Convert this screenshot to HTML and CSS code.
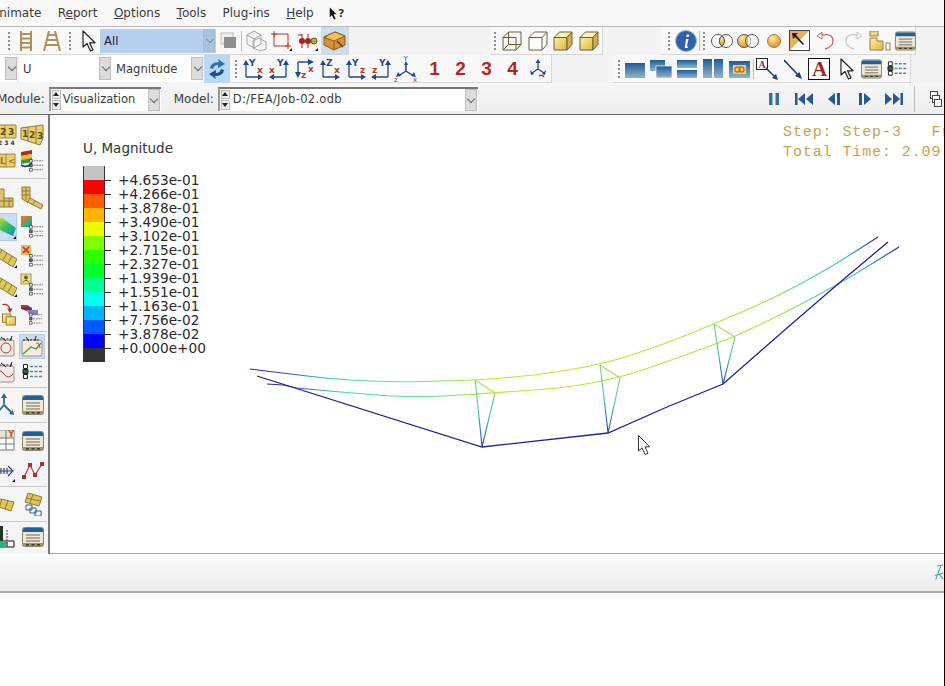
FILE: index.html
```html
<!DOCTYPE html>
<html lang="en">
<head>
<meta charset="utf-8">
<title>Abaqus/CAE Visualization</title>
<link rel="stylesheet" href="styles.css">
</head>
<body>
<svg class="sprite" aria-hidden="true">
  <defs>
    <linearGradient id="gold" x1="0" y1="0" x2="1" y2="1"><stop offset="0" stop-color="#fdf0a8"/><stop offset="1" stop-color="#e2b440"/></linearGradient>
    <linearGradient id="steel" x1="0" y1="0" x2="0" y2="1"><stop offset="0" stop-color="#1c5c96"/><stop offset="1" stop-color="#94b4cf"/></linearGradient>
    <radialGradient id="ball" cx=".4" cy=".3" r=".8"><stop offset="0" stop-color="#ffe9a0"/><stop offset="1" stop-color="#d9861a"/></radialGradient>
    <linearGradient id="rain" x1="0" y1="0" x2="1" y2="1"><stop offset="0" stop-color="#e8e020"/><stop offset=".5" stop-color="#30c060"/><stop offset="1" stop-color="#2080d0"/></linearGradient>
    <linearGradient id="chordA" gradientUnits="userSpaceOnUse" x1="250" y1="0" x2="878" y2="0">
      <stop offset="0" stop-color="#20208c"/><stop offset=".07" stop-color="#3060b0"/><stop offset=".13" stop-color="#40d8d0"/><stop offset=".24" stop-color="#60e090"/><stop offset=".36" stop-color="#b4ec30"/><stop offset=".8" stop-color="#a8ec30"/><stop offset=".89" stop-color="#50d8a0"/><stop offset=".945" stop-color="#40c0d8"/><stop offset=".98" stop-color="#2860b0"/><stop offset="1" stop-color="#20208c"/>
    </linearGradient>
    <linearGradient id="chordB" gradientUnits="userSpaceOnUse" x1="267" y1="0" x2="899" y2="0">
      <stop offset="0" stop-color="#20208c"/><stop offset=".05" stop-color="#3060b0"/><stop offset=".12" stop-color="#40d8d0"/><stop offset=".26" stop-color="#60e090"/><stop offset=".36" stop-color="#b4ec30"/><stop offset=".8" stop-color="#a8ec30"/><stop offset=".88" stop-color="#50d8a0"/><stop offset=".94" stop-color="#40c0d8"/><stop offset=".98" stop-color="#2860b0"/><stop offset="1" stop-color="#20208c"/>
    </linearGradient>
    <linearGradient id="web" gradientUnits="objectBoundingBox" x1="0" y1="0" x2="0" y2="1">
      <stop offset="0" stop-color="#80d860"/><stop offset=".45" stop-color="#40c0c0"/><stop offset="1" stop-color="#2040b0"/>
    </linearGradient>
  </defs>
  <symbol id="table" viewBox="0 0 22 20">
    <rect x=".5" y=".5" width="21" height="19" rx="2" fill="#efe9d6" stroke="#8a8468"/>
    <path d="M1 5V2.500Q1 1 2.500 1H19.500Q21 1 21 2.500V5Z" fill="#1f6098"/>
    <path d="M4 8H18M4 11H18M4 14H18" stroke="#6d6a58"/>
    <path d="M1 16H21V19H1Z" fill="#9d9670"/>
    <path d="M4 17h3v1.500H4ZM9.500 17h3v1.500h-3ZM15 17h3v1.500h-3Z" fill="#3f3d2c"/>
  </symbol>
  <symbol id="list" viewBox="0 0 22 20">
    <path d="M1.500 2.500h4v4h-4ZM1.500 12.500h4v4h-4Z" fill="#fff" stroke="#222"/>
    <path d="M1 7.500h5v4H1Z" fill="#3d5a40" stroke="#222"/>
    <path d="M8 4.500h13M8 9.500h13M8 14.500h13" stroke="#5b7fa0" stroke-width="1.500" stroke-dasharray="3 1.500"/>
  </symbol>
  <symbol id="minilist" viewBox="0 0 16 16">
    <path d="M.5 1.500h3v3h-3ZM.5 11h3v3h-3Z" fill="#fff" stroke="#333" stroke-width=".8"/>
    <path d="M.5 6.200h3v3h-3Z" fill="#5a7a5a" stroke="#333" stroke-width=".8"/>
    <path d="M5 3h10M5 7.700h10M5 12.500h10" stroke="#667" stroke-dasharray="2 1"/>
  </symbol>
  <symbol id="dots" viewBox="0 0 2 20"><path d="M1 1v18" stroke="#8f8f8f" stroke-width="2" stroke-dasharray="2 2"/></symbol>
  <symbol id="pointer" viewBox="0 0 14 22"><path d="M1 1V17L5 13.500L8.500 21L11 20L7.500 12.800H13Z" fill="#fff" stroke="#222" stroke-width="1.200" stroke-linejoin="round"/></symbol>
  <symbol id="cubewire" viewBox="0 0 20 20"><path d="M1 6.500H14V19H1ZM1 6.500L6.500 1H19V13.500L14 19M6.500 1V13.500H19M6.500 13.500L1 19" fill="none" stroke="#6a5e38"/></symbol>
  <symbol id="cubehid" viewBox="0 0 20 20"><path d="M1 6.500H14V19H1ZM1 6.500L6.500 1H19V13.500L14 19M14 6.500L19 1" fill="#fff" stroke="#6a5e38"/></symbol>
  <symbol id="cubesolid" viewBox="0 0 20 20"><path d="M1 6.500H14V19H1Z" fill="url(#gold)" stroke="#6a5e38"/><path d="M1 6.500L6.500 1H19L14 6.500Z" fill="#fdf3b8" stroke="#6a5e38"/><path d="M14 6.500L19 1V13.500L14 19Z" fill="#d9ad40" stroke="#6a5e38"/></symbol>
  <symbol id="yellowband" viewBox="0 0 17 24"><path d="M-6 1L17 15L13 23L-6 11Z" fill="#dcc75c" stroke="#8f7c30"/><path d="M2 6L-2 13M7 9L3 16M12 12L8 19" stroke="#8f7c30"/></symbol>
</svg>

<div class="page">
  <nav class="menubar">
    <span class="menu menu-first">Animate</span>
    <span class="menu">R<u>e</u>port</span>
    <span class="menu"><u>O</u>ptions</span>
    <span class="menu"><u>T</u>ools</span>
    <span class="menu">Plug-ins</span>
    <span class="menu"><u>H</u>elp</span>
    <span class="menu help-q"><svg class="i9" viewBox="0 0 7 12"><path d="M.5 .5V9.500L2.500 7.500L4.500 11.500L6 10.800L4 6.800H6.800Z" fill="#111"/></svg>?</span>
  </nav>

  <div class="toolrow">
    <div class="group w349">
      <svg class="dots ml8"><use href="#dots"/></svg>
      <svg class="ml9 w14h20" viewBox="0 0 14 20"><path d="M2 0V20M12 0V20M2 3H12M2 7.500H12M2 12H12M2 16.500H12" stroke="#ad9155" stroke-width="2"/></svg>
      <svg class="ml10 w18h20" viewBox="0 0 18 20"><path d="M6 0L1 20M12 0L17 20M4 4H14M3.200 9H14.800M2.200 14H15.800" stroke="#ad9155" stroke-width="2" fill="none"/></svg>
      <svg class="dots ml8"><use href="#dots"/></svg>
      <svg class="ml11 w14h22"><use href="#pointer"/></svg>
      <div class="combo combo-sel ml4 w116"><span class="combo-text">All</span><span class="arrow arrow-dim"></span></div>
      <svg class="ml4 w16h20" viewBox="0 0 16 20"><rect x="1" y="2" width="12" height="11" fill="#eee" stroke="#bbb"/><rect x="4" y="6" width="12" height="11" fill="#8f8f8f"/></svg>
      <span class="vsep ml5"></span>
      <svg class="ml4 w22h22" viewBox="0 0 22 22"><path d="M1 5L8 1L15 5L15 14L8 18L1 14ZM1 5L8 9L15 5M8 9V18M7 11L13 8L20 12V19L14 21L7 18Z" fill="none" stroke="#a3a3a3"/></svg>
      <svg class="ml3 w21h22" viewBox="0 0 21 22"><path d="M3 4H17V16H3Z" fill="none" stroke="#b03a2a"/><path d="M3 1V7M0 4H6M17 13V19M14 16H20" stroke="#b03a2a"/><path d="M18 21h3v-3Z" fill="#111"/></svg>
      <svg class="ml5 w21h22" viewBox="0 0 21 22"><circle cx="5" cy="11" r="3" fill="#a8241a"/><circle cx="11" cy="11" r="3" fill="#a8241a"/><circle cx="17" cy="11" r="3" fill="#c8a040" stroke="#665020"/><path d="M5 4V18M11 4V18M1 5H5" stroke="#a8241a"/><path d="M18 21h3v-3Z" fill="#111"/></svg>
      <span class="hl ml3 w27">
        <svg class="w23h20" viewBox="0 0 23 20"><path d="M1 6L12 1L22 5V14L11 19L1 14Z" fill="#dd8e2e" stroke="#8b5a1c"/><path d="M1 6L11 10L22 5L12 1Z" fill="#f3c060" stroke="#8b5a1c"/><path d="M11 10V19" stroke="#8b5a1c"/><path d="M14 10L20 16" stroke="#444" stroke-width="1.500"/></svg>
      </span>
    </div>
    <div class="group ml141 w113">
      <svg class="dots ml4"><use href="#dots"/></svg>
      <svg class="ml6 w20h20"><use href="#cubewire"/></svg>
      <svg class="ml6 w20h20"><use href="#cubehid"/></svg>
      <svg class="ml5 w20h20"><use href="#cubesolid"/></svg>
      <svg class="ml6 w20h20"><use href="#cubesolid"/></svg>
    </div>
    <div class="group ml58 w255">
      <svg class="dots ml7"><use href="#dots"/></svg>
      <svg class="ml5 w22h22" viewBox="0 0 22 22"><circle cx="11" cy="11" r="10.500" fill="#2f62a8" stroke="#9db6d8"/><path d="M11.800 4.500h2.500l-.6 2.500h-2.500ZM11 9h2.500L11.800 16.500h1.500l-.4 1.500H9.800Z" fill="#fff"/></svg>
      <span class="vsep ml2"></span>
      <svg class="dots ml3"><use href="#dots"/></svg>
      <svg class="ml5 w24h14" viewBox="0 0 24 14"><circle cx="8" cy="7" r="6.500" fill="#fff" stroke="#555"/><circle cx="16" cy="7" r="6.500" fill="#fff" stroke="#555"/><path d="M12 1.800a6.500 6.500 0 0 1 0 10.400a6.500 6.500 0 0 1 0-10.400Z" fill="url(#ball)" stroke="#555"/></svg>
      <svg class="ml2 w24h14" viewBox="0 0 24 14"><circle cx="8" cy="7" r="6.500" fill="url(#ball)" stroke="#555"/><path d="M12 1.800a6.500 6.500 0 0 1 0 10.400" fill="#fff"/><circle cx="16" cy="7" r="6.500" fill="none" stroke="#555"/></svg>
      <svg class="ml6 w16h16" viewBox="0 0 16 16"><circle cx="8" cy="8" r="6.500" fill="url(#ball)" stroke="#b07a30"/></svg>
      <svg class="ml7 w21h21" viewBox="0 0 21 21"><rect x=".5" y=".5" width="20" height="20" fill="#e8b060" stroke="#444"/><path d="M1 20L20 1V20Z" fill="#fff"/><path d="M3 3L9 3L7 5L15 14L14 15L6 7L4 9Z" fill="#222"/></svg>
      <svg class="ml6 w19h20" viewBox="0 0 19 20"><path d="M6 4Q17 2 17 10Q17 16 9 18" fill="none" stroke="#b8706a" stroke-width="1.300"/><path d="M1 5L6 1V8Z" fill="none" stroke="#b8706a"/></svg>
      <svg class="ml9 w19h20" viewBox="0 0 19 20"><path d="M13 4Q2 2 2 10Q2 16 10 18" fill="none" stroke="#c8c8c8" stroke-width="1.300"/><path d="M18 5L13 1V8Z" fill="none" stroke="#c8c8c8"/></svg>
      <svg class="ml6 w22h20" viewBox="0 0 22 20"><rect x="1" y="0" width="8" height="5" fill="#efd488" stroke="#9a8040"/><path d="M1 7H8V10H14V19H1Z" fill="url(#gold)" stroke="#9a8040"/><rect x="17" y="12" width="4" height="7" fill="#fff" stroke="#9a8040"/></svg>
      <svg class="ml4 w21h20"><use href="#table"/></svg>
    </div>
  </div>

  <div class="toolrow">
    <div class="field w17"><span class="arrow"></span></div>
    <div class="combo ml2 w93"><span class="combo-text">U</span><span class="arrow"></span></div>
    <div class="combo w92"><span class="combo-text">Magnitude</span><span class="arrow"></span></div>
    <span class="hl hl-strong w26">
      <svg class="w20h20" viewBox="0 0 20 20"><path d="M3 9Q4 3 12 3L11 0L18 5L11 9V6Q7 6 6 10Z" fill="#2f6fb0"/><path d="M17 11Q16 17 8 17L9 20L2 15L9 11V14Q13 14 14 10Z" fill="#1f4f86"/></svg>
    </span>
    <div class="group w321 ml1">
      <svg class="dots ml4"><use href="#dots"/></svg>
      <svg class="ml5 axis" viewBox="0 0 22 20"><path d="M4 18V4M4 18H19" stroke="#1f4a8a" stroke-width="1.300" fill="none"/><path d="M1 6L4 1L7 6ZM16 15L21 18L16 21Z" fill="#1f4a8a"/><text class="ax-b" x="7" y="7">Y</text><text class="ax-r" x="15" y="14">x</text></svg>
      <svg class="ml4 axis" viewBox="0 0 22 20"><path d="M18 18V4M18 18H3" stroke="#1f4a8a" stroke-width="1.300" fill="none"/><path d="M15 6L18 1L21 6ZM6 15L1 18L6 21Z" fill="#1f4a8a"/><text class="ax-b" x="9" y="7">Y</text><text class="ax-r" x="1" y="14">x</text></svg>
      <svg class="ml4 axis" viewBox="0 0 22 20"><path d="M4 3V16M4 3H17" stroke="#1f4a8a" stroke-width="1.300" fill="none"/><path d="M1 13L4 19L7 13ZM14 0L20 3L14 6Z" fill="#1f4a8a"/><text class="ax-r" x="14" y="13">x</text><text class="ax-r" x="7" y="19">z</text></svg>
      <svg class="ml3 axis" viewBox="0 0 22 20"><path d="M4 18V4M4 18H19" stroke="#1f4a8a" stroke-width="1.300" fill="none"/><path d="M1 6L4 1L7 6ZM16 15L21 18L16 21Z" fill="#1f4a8a"/><text class="ax-b" x="7" y="7">Z</text><text class="ax-r" x="15" y="14">x</text></svg>
      <svg class="ml4 axis" viewBox="0 0 22 20"><path d="M4 18V4M4 18H19" stroke="#1f4a8a" stroke-width="1.300" fill="none"/><path d="M1 6L4 1L7 6ZM16 15L21 18L16 21Z" fill="#1f4a8a"/><text class="ax-b" x="7" y="7">Y</text><text class="ax-r" x="15" y="14">z</text></svg>
      <svg class="ml3 axis" viewBox="0 0 22 20"><path d="M18 18V4M18 18H3" stroke="#1f4a8a" stroke-width="1.300" fill="none"/><path d="M15 6L18 1L21 6ZM6 15L1 18L6 21Z" fill="#1f4a8a"/><text class="ax-b" x="9" y="7">Y</text><text class="ax-r" x="2" y="14">z</text></svg>
      <svg class="ml2 axis-iso" viewBox="0 0 24 24"><path d="M12 14V6M12 14L6 18M12 14L18 18" stroke="#1f4a8a" stroke-width="1.500" fill="none"/><path d="M10 8L12 4L14 8ZM4 15L2 20L7 19ZM20 15L22 20L17 19Z" fill="#1f4a8a"/><text class="ax-s" x="9.500" y="4">Y</text><text class="ax-s ax-sr" x="0" y="25">z</text><text class="ax-s ax-sr" x="19" y="25">x</text></svg>
      <span class="num ml11">1</span>
      <span class="num ml15">2</span>
      <span class="num ml15">3</span>
      <span class="num ml15">4</span>
      <svg class="ml12 w16h20" viewBox="0 0 16 20"><path d="M8 10V3M8 10L2 14M8 10L14 14" stroke="#1f4a8a" stroke-width="1.300" fill="none"/><path d="M5.500 4L8 0L10.500 4ZM0 11L1 16L4 15ZM16 11L15 16L12 15Z" fill="#1f4a8a"/><path d="M9 17Q12 15 14 18" fill="none" stroke="#b03a2a" stroke-width="1.500"/></svg>
    </div>
    <div class="group ml61 w298">
      <svg class="dots ml5"><use href="#dots"/></svg>
      <svg class="ml5 w20h20" viewBox="0 0 20 20"><rect y="4" width="20" height="15" fill="url(#steel)"/></svg>
      <svg class="ml5 w22h20" viewBox="0 0 22 20"><rect y="1" width="15" height="11" fill="url(#steel)"/><rect x="6" y="7" width="16" height="12" fill="url(#steel)" stroke="#fff" stroke-width=".7"/></svg>
      <svg class="ml5 w20h20" viewBox="0 0 20 20"><rect y="1" width="20" height="8" fill="url(#steel)"/><rect y="11" width="20" height="8" fill="url(#steel)"/></svg>
      <svg class="ml6 w20h20" viewBox="0 0 20 20"><rect width="9" height="19" fill="url(#steel)"/><rect x="11" width="9" height="19" fill="url(#steel)"/></svg>
      <svg class="ml6 w21h20" viewBox="0 0 21 20"><rect y="2" width="21" height="17" fill="url(#steel)"/><rect x="4" y="6" width="13" height="9" fill="#f0d070"/><circle cx="8.500" cy="10.500" r="2.500" fill="none" stroke="#c8701a" stroke-width="1.400"/><circle cx="12.500" cy="10.500" r="2.500" fill="none" stroke="#c8701a" stroke-width="1.400"/></svg>
      <span class="vsep ml3"></span>
      <svg class="ml2 w22h22" viewBox="0 0 22 22"><rect x=".5" y=".5" width="11" height="11" fill="#fff" stroke="#222"/><text class="ax-a" x="2.500" y="10">A</text><path d="M10 10L20 20" stroke="#1f3f7a" stroke-width="1.500"/><path d="M16 20L22 22L20 16Z" fill="#1f3f7a"/></svg>
      <svg class="ml6 w18h20" viewBox="0 0 18 20"><path d="M0 1L15 17" stroke="#1f3f7a" stroke-width="1.600"/><path d="M11 17L18 20L15.500 13Z" fill="#1f3f7a"/></svg>
      <svg class="ml6 w22h22" viewBox="0 0 22 22"><rect x=".5" y=".5" width="21" height="21" fill="#fff" stroke="#111"/><text class="ax-abig" x="4" y="18">A</text></svg>
      <svg class="ml10 w14h22"><use href="#pointer"/></svg>
      <svg class="ml7 w21h20"><use href="#table"/></svg>
      <svg class="ml5 w21h20"><use href="#list"/></svg>
    </div>
  </div>

  <div class="contextrow">
    <label class="ctx-label ctx-module">Module:</label>
    <div class="combo combo-sunk ml4 w112">
      <span class="spin"><i class="up"></i><i class="down"></i></span>
      <span class="combo-text combo-tight">Visualization</span>
      <span class="arrow"></span>
    </div>
    <label class="ctx-label ml13">Model:</label>
    <div class="combo combo-sunk ml4 w260">
      <span class="spin"><i class="up"></i><i class="down"></i></span>
      <span class="combo-text combo-path">D:/FEA/Job-02.odb</span>
      <span class="arrow"></span>
    </div>
    <svg class="ml291 play" viewBox="0 0 10 14"><path d="M0 1h3.500v12H0ZM6.500 1H10v12H6.500Z" fill="#336f9f"/></svg>
    <svg class="ml16 play18" viewBox="0 0 18 12"><path d="M0 0h2.500v12H0ZM10 0v12L3 6ZM18 0v12L11 6Z" fill="#26598c"/></svg>
    <svg class="ml15 play12" viewBox="0 0 12 12"><path d="M7 0v12L0 6ZM9 0h3v12H9Z" fill="#26598c"/></svg>
    <svg class="ml19 play12" viewBox="0 0 12 12"><path d="M5 0v12L12 6ZM0 0h3v12H0Z" fill="#26598c"/></svg>
    <svg class="ml14 play18" viewBox="0 0 18 12"><path d="M0 0v12L7 6ZM8 0v12L15 6ZM15.500 0H18v12h-2.500Z" fill="#26598c"/></svg>
    <span class="vsep vsep-tall ml11"></span>
    <svg class="ml15 w12h16" viewBox="0 0 12 16"><rect x=".5" y=".5" width="7" height="7" fill="#fff" stroke="#444"/><rect x="2.500" y="4.500" width="7" height="7" fill="#fff" stroke="#444"/><rect x="4.500" y="8.500" width="7" height="7" fill="#fff" stroke="#444"/></svg>
  </div>

  <main class="workspace">
    <aside class="sidebar">
      <section class="side-sec sec1">
        <div class="side-row h26">
          <svg class="cellL" viewBox="0 0 17 22"><path d="M-4 1H16V14H-4Z" fill="#e8cf6c" stroke="#9a8540"/><path d="M5 1V14" stroke="#9a8540"/><text class="sm" x="0" y="11">2</text><text class="sm" x="8" y="11">3</text><text class="xs" x="-2" y="21">2 3 4</text></svg>
          <svg class="cellR w24h22" viewBox="0 0 24 22"><path d="M1 4L23 1V14L20 21L1 15Z" fill="#e8cf6c" stroke="#8c7a3c"/><path d="M8 3V17M16 2V19" stroke="#8c7a3c"/><text class="sm" x="2" y="13">1</text><text class="sm" x="9" y="14">2</text><text class="sm" x="17" y="15">3</text></svg>
        </div>
        <div class="side-row h26">
          <svg class="cellL" viewBox="0 0 17 22"><path d="M-4 4H15V17H-4Z" fill="#e8cf6c" stroke="#9a8540"/><path d="M6 4V17" stroke="#9a8540"/><text class="sm sm-o" x="0" y="14">L</text><text class="sm sm-o" x="8" y="14">&lt;</text></svg>
          <svg class="cellR w24h24" viewBox="0 0 24 24"><path d="M1 3L12 1V5L1 7Z" fill="#b03020"/><path d="M1 7L12 5V9L1 11Z" fill="#e8c020"/><path d="M1 11L12 9V13L1 15Z" fill="#30a040"/><path d="M1 15Q6 19 12 13V16Q6 20 1 17Z" fill="#204080"/><use href="#minilist" x="9" y="9" width="15" height="15"/></svg>
        </div>
      </section>
      <section class="side-sec sec2">
        <div class="side-row h29">
          <svg class="cellL" viewBox="0 0 17 22"><path d="M-4 2H4V11H13V20H-4Z" fill="#dcc46a" stroke="#8f7c30"/><path d="M-4 14H13M4 11V20M9 11V20" stroke="#8f7c30"/></svg>
          <svg class="cellR w24h24" viewBox="0 0 24 24"><path d="M2 1H10V12L23 19L21 23L2 13Z" fill="#dcc46a" stroke="#8f7c30"/><path d="M2 5H10M2 9H10M6 1V14M10 12L7 17M15 15L12 19" stroke="#8f7c30"/></svg>
        </div>
        <div class="side-row h29">
          <span class="cellL hl-side"><svg class="w16h24" viewBox="0 0 16 24"><path d="M-4 3L2 3L16 13L13 21L-4 13Z" fill="url(#rain)"/><path d="M13 24h3v-3Z" fill="#111"/></svg></span>
          <svg class="cellR w24h24" viewBox="0 0 24 24"><path d="M1 1H12V12H1Z" fill="url(#rain)"/><path d="M1 12L12 1V1H1Z" fill="#e06040" opacity=".7"/><use href="#minilist" x="9" y="9" width="15" height="15"/></svg>
        </div>
        <div class="side-row h29">
          <svg class="cellL" viewBox="0 0 17 24"><use href="#yellowband" width="17" height="24"/><path d="M14 24h3v-3Z" fill="#111"/></svg>
          <svg class="cellR w24h24" viewBox="0 0 24 24"><rect x="1" y="1" width="10" height="10" fill="#edb860"/><path d="M3 3L9 9M9 3L3 9" stroke="#b03a20" stroke-width="1.600"/><use href="#minilist" x="9" y="9" width="15" height="15"/></svg>
        </div>
        <div class="side-row h29">
          <svg class="cellL" viewBox="0 0 17 24"><use href="#yellowband" width="17" height="24"/><path d="M14 24h3v-3Z" fill="#111"/></svg>
          <svg class="cellR w24h24" viewBox="0 0 24 24"><rect x="1" y="1" width="10" height="10" fill="#ecdc90" stroke="#a89850"/><circle cx="6" cy="4.500" r="2" fill="#6a5a30"/><path d="M3 9.500Q6 5 9 9.500" stroke="#6a5a30" fill="none"/><use href="#minilist" x="9" y="9" width="15" height="15"/></svg>
        </div>
        <div class="side-row h29">
          <svg class="cellL" viewBox="0 0 17 26"><path d="M2 3Q9 1 10 9" fill="none" stroke="#b03a20" stroke-width="1.500"/><path d="M7 7L10 12L13 7Z" fill="#b03a20"/><rect x="2" y="13" width="9" height="9" fill="url(#gold)" stroke="#8f7c30"/><rect x="6" y="16" width="10" height="9" fill="url(#gold)" stroke="#8f7c30"/></svg>
          <svg class="cellR w24h24" viewBox="0 0 24 24"><path d="M1 3H7L12 6V9H7L1 7Z" fill="#74306a"/><path d="M7 8H18V13H9Z" fill="#8a80c0"/><path d="M1 3H7V5H1Z" fill="#b04030"/><use href="#minilist" x="9" y="10" width="14" height="14"/></svg>
        </div>
      </section>
      <section class="side-sec sec3">
        <div class="side-row h26">
          <svg class="cellL chart" viewBox="0 0 17 24"><rect x="-6" y="6" width="20" height="16" rx="2" fill="#f0e9e6" stroke="#a09088"/><path d="M-4 5H13" stroke="#222" stroke-dasharray="2 1.500"/><path d="M1 3L6 7M12 2L10 7" stroke="#222"/><circle cx="6" cy="14" r="5" fill="none" stroke="#b04040"/></svg>
          <span class="cellR hl-chart"><svg class="w22h22" viewBox="0 0 22 22"><rect x="1" y="5" width="20" height="16" rx="2" fill="#f4ece0" stroke="#a09088"/><path d="M2 5H18" stroke="#222" stroke-dasharray="2 1.500"/><path d="M5 2L8 6M15 1L14 6" stroke="#222"/><path d="M2 19L10 12L15 14L20 8" fill="none" stroke="#4a9040" stroke-width="1.200"/><path d="M15 8Q19 8 19 13" fill="none" stroke="#b04040"/></svg></span>
        </div>
        <div class="side-row h26">
          <svg class="cellL chart" viewBox="0 0 17 24"><rect x="-6" y="6" width="20" height="16" rx="2" fill="#f0e9e6" stroke="#a09088"/><path d="M-4 5H13" stroke="#222" stroke-dasharray="2 1.500"/><path d="M1 3L6 7M12 2L10 7" stroke="#222"/><path d="M-4 14Q0 8 4 14T13 14" fill="none" stroke="#b04040"/></svg>
          <svg class="cellR w22h20 nudge2"><use href="#list"/></svg>
        </div>
      </section>
      <section class="side-sec sec4">
        <div class="side-row h34">
          <svg class="cellL" viewBox="0 0 17 22"><path d="M4 11V2M4 11L-2 18M4 11L12 19" fill="none" stroke="#336a98" stroke-width="1.800"/><path d="M1 4L4 -1L7 4ZM9 20L14 21L13 16Z" fill="#336a98"/></svg>
          <svg class="cellR w22h20 nudge2"><use href="#table"/></svg>
        </div>
      </section>
      <section class="side-sec sec5">
        <div class="side-row h30">
          <svg class="cellL" viewBox="0 0 17 22"><path d="M-3 1H14V20H-3Z" fill="#fff" stroke="#777"/><path d="M-3 1H14V8H-3Z" fill="#f0e0d0"/><path d="M-3 8H14M-3 14H14M6 1V20" stroke="#777"/><text class="sm sm-o" x="8" y="7">Y</text></svg>
          <svg class="cellR w22h20 nudge2"><use href="#table"/></svg>
        </div>
        <div class="side-row h30">
          <svg class="cellL" viewBox="0 0 17 22"><path d="M-2 11H12M8 6L13 11L8 16M1 8V14M4 8V14M7 8V14" fill="none" stroke="#33407a" stroke-width="1.200"/><path d="M12 22h3v-3Z" fill="#111"/></svg>
          <svg class="cellR w22h20 nudge2" viewBox="0 0 22 20"><path d="M2 16L8 4L13 14L20 3" fill="none" stroke="#a84040" stroke-width="1.200"/><path d="M0 14h4v4H0ZM6 2h4v4H6ZM11 12h4v4h-4ZM18 1h4v4h-4Z" fill="#b02a30"/></svg>
        </div>
      </section>
      <section class="side-sec sec6">
        <div class="side-row h34">
          <svg class="cellL" viewBox="0 0 17 20"><path d="M-4 4L14 8L11 17L-4 12Z" fill="#dcc75c" stroke="#8f7c30"/><path d="M2 5L-1 14M8 7L5 15" stroke="#8f7c30"/></svg>
          <svg class="cellR w20h24 nudge3" viewBox="0 0 20 24"><path d="M4 1L18 5L15 14L1 10Z" fill="#dcc75c" stroke="#8f7c30"/><path d="M9 2L6 11M2 6L16 9" stroke="#8f7c30"/><path d="M2 13h6v5H2ZM6 16h6v5H6ZM11 19h6v5h-6Z" fill="none" stroke="#3a5a90"/></svg>
        </div>
      </section>
      <section class="side-sec sec7">
        <div class="side-row h30">
          <svg class="cellL" viewBox="0 0 17 22"><path d="M-2 15H14V21H-2Z" fill="#fff" stroke="#111"/><path d="M-2 15H8V21H-2Z" fill="#2fb080"/><path d="M-2 0H3V15H-2Z" fill="#1c3a1c"/><path d="M7 4V22" stroke="#a02060" stroke-dasharray="2 1"/></svg>
          <svg class="cellR w22h20 nudge2"><use href="#table"/></svg>
        </div>
      </section>
    </aside>

    <section class="viewport">
      <div class="legend">
        <div class="legend-title">U, Magnitude</div>
        <div class="legend-body">
          <div class="legend-bar">
            <span class="c0"></span><span class="c1"></span><span class="c2"></span><span class="c3"></span><span class="c4"></span><span class="c5"></span><span class="c6"></span><span class="c7"></span><span class="c8"></span><span class="c9"></span><span class="c10"></span><span class="c11"></span><span class="c12"></span><span class="c13"></span>
          </div>
          <ol class="legend-labels">
            <li>+4.653e-01</li><li>+4.266e-01</li><li>+3.878e-01</li><li>+3.490e-01</li><li>+3.102e-01</li><li>+2.715e-01</li><li>+2.327e-01</li><li>+1.939e-01</li><li>+1.551e-01</li><li>+1.163e-01</li><li>+7.756e-02</li><li>+3.878e-02</li><li>+0.000e+00</li>
          </ol>
        </div>
      </div>
      <div class="stepinfo">Step: Step-3   Fr<br>Total Time: 2.09</div>
      <svg class="model" viewBox="50 115 895 439">
        <path class="chord a" d="M250 369L270 371.500Q290 374 311.500 376.500Q333 379 351.500 380Q370 381 388.500 381.500Q407 382 423.500 381.500Q440 381 457.500 380.500Q475 380 502.500 378Q530 376 565 370.500Q600 365 628.500 356Q657 347 685.500 335.500Q714 324 742 312Q770 300 793.500 287.500Q817 275 832 266Q847 257 878 237"/>
        <path class="chord b" d="M267 384L283 385L297 388L318.500 390Q340 392 365 394Q390 396 408.500 396.500Q427 397 461 395Q495 393 512.500 391.500Q530 390 546.500 389Q563 388 591.500 383Q620 378 650 367.500Q680 357 707.500 347Q735 337 762.500 323.500Q790 310 813.500 297.500Q837 285 853.500 275Q870 265 899 247"/>
        <polyline class="chord c" points="257,376 482,447 608,433 667,407 723,384 787,328 838,284 888,242"/>
        <path class="webline" d="M475.100 380L482.100 447"/>
        <path class="webline" d="M495 393L482 447"/>
        <path class="webtop" d="M475 380L495 393M600 365L620 378M714 324L735 337"/>
        <path class="webline" d="M600.100 365L608.100 433"/>
        <path class="webline" d="M620 378L608 433"/>
        <path class="webline" d="M714.100 324L723.100 384"/>
        <path class="webline" d="M735 337L723 384"/>
        <path class="cursor" d="M638.500 435.500V451L642 447.800L645 454.500L648 453.200L645 446.800H649.800Z"/>
      </svg>
    </section>
  </main>

  <footer class="promptbar">
    <svg class="prompt-icon" viewBox="0 0 12 24"><path d="M11 2L4 4M8 4L2 20M1 15L11 12M6 13L11 19" fill="none" stroke="#4aa8a8" stroke-width="1.300"/></svg>
  </footer>
</div>
</body>
</html>
```

FILE: styles.css
```css
* { box-sizing: border-box; }
html, body { margin: 0; padding: 0; background: #fff; }
body { width: 945px; height: 686px; overflow: hidden; font-family: "DejaVu Sans", sans-serif; font-size: 12px; color: #333; }
svg { display: block; flex: none; overflow: hidden; }
.sprite { position: absolute; width: 0; height: 0; }

.page { width: 945px; height: 686px; border-right: 1px solid #000; overflow: hidden; background: #fff; }

/* menu */
.menubar { display: flex; align-items: center; gap: 16.4px; height: 27px; background: #f8f8f8; border-bottom: 1px solid #b8b8b8; white-space: nowrap; color: #3a3a3a; }
.menu-first { margin-left: -9px; }
.help-q { display: flex; align-items: center; gap: 1px; font-weight: bold; font-size: 11px; margin-left: -1px; }

/* toolbars */
.toolrow { display: flex; height: 28px; background: #f3f3f3; }
.group { display: flex; align-items: center; height: 28px; flex: none; background: #f8f8f8; border-right: 1px solid #d6d6d6; border-bottom: 1px solid #d6d6d6; }
.dots { width: 2px; height: 20px; }
.vsep { width: 1px; height: 20px; background: #bdbdbd; flex: none; }
.vsep-tall { height: 26px; }
.hl { display: flex; align-items: center; justify-content: center; height: 27px; background: #c9def2; flex: none; }
.hl-strong { background: #b8d8f5; height: 28px; }
.num { font-family: "Liberation Sans", sans-serif; font-weight: bold; font-size: 19px; color: #b0281e; width: 11px; text-align: center; flex: none; }
.axis { width: 22px; height: 22px; overflow: visible; }
.axis-iso { width: 24px; height: 24px; overflow: visible; }
.ax-b, .ax-r, .ax-s { font-family: "DejaVu Sans", sans-serif; font-weight: bold; font-size: 9px; }
.ax-b { fill: #1f4a8a; }
.ax-r { fill: #b03a2a; }
.ax-s { fill: #1f4a8a; font-size: 7px; font-weight: normal; }
.ax-sr { fill: #8a3a3a; }
.ax-a { font-family: "Liberation Serif", serif; font-weight: bold; font-size: 10px; fill: #a0282a; }
.ax-abig { font-family: "Liberation Serif", serif; font-weight: bold; font-size: 21px; fill: #a8201e; }

/* combos */
.field, .combo { display: flex; align-items: center; height: 27px; background: #fff; flex: none; }
.field { justify-content: flex-end; }
.combo { justify-content: space-between; padding-right: 1px; }
.combo-text { flex: 1; padding-left: 4px; font-size: 11.6px; color: #3a3a3a; white-space: nowrap; }
.combo-sel { height: 24px; background: #b5d0ef; }
.combo-sel .combo-text { color: #223; }
.arrow { position: relative; display: block; width: 12px; height: 23px; flex: none; background: #dcdcdc; border: 1px solid #bcbcbc; }
.arrow::after { content: ""; position: absolute; left: 2.5px; top: 6px; width: 5px; height: 5px; border-right: 1px solid #666; border-bottom: 1px solid #666; transform: rotate(45deg); }
.arrow-dim { background: #a9c3df; border-color: #a4bbd4; }
.arrow-dim::after { border-color: #88a; }

/* context row */
.contextrow { display: flex; align-items: center; height: 32px; background: linear-gradient(#f6f6f6, #eeeeee); border-bottom: 1px solid #666; white-space: nowrap; }
.ctx-label { color: #3a3a3a; font-size: 12px; flex: none; }
.ctx-module { margin-left: -3px; }
.combo-sunk { height: 24px; border-top: 2px solid #777; border-left: 2px solid #9a9a9a; padding-left: 1px; }
.combo-sunk .combo-text { padding-bottom: 2px; font-size: 11.5px; }
.combo-sunk .combo-tight { padding-left: 2px; }
.combo-sunk .combo-path { padding-left: 3px; letter-spacing: .3px; }
.combo-sunk .arrow { height: 22px; }
.spin { display: flex; flex-direction: column; gap: 1px; width: 9px; height: 20px; flex: none; }
.spin i { display: flex; align-items: center; justify-content: center; flex: 1; background: #eee; border: 1px solid #bbb; }
.spin .up::after { content: ""; border-left: 3px solid transparent; border-right: 3px solid transparent; border-bottom: 4px solid #222; }
.spin .down::after { content: ""; border-left: 3px solid transparent; border-right: 3px solid transparent; border-top: 4px solid #222; }
.play { width: 10px; height: 14px; }
.play18 { width: 18px; height: 12px; }
.play12 { width: 12px; height: 12px; }

/* workspace */
.workspace { display: flex; height: 439px; }
.sidebar { width: 50px; flex: none; height: 439px; background: #f5f5f5; border-right: 2px solid #7a7a7a; overflow: hidden; }
.side-sec { border-bottom: 1px solid #cbcbcb; margin-right: 1px; }
.side-sec:last-child { border-bottom: 0; }
.sec1 { padding: 7px 0 4px; }
.sec2 { padding: 4px 0 3px; }
.sec3 { padding: 1px 0 2px; }
.sec5 { padding-top: 3px; }
.side-row { display: flex; align-items: center; }
.h26 { height: 26px; }
.h29 { height: 29px; }
.h30 { height: 30px; }
.h34 { height: 34px; }
.cellL { width: 17px; height: 24px; flex: none; }
.cellR { margin-left: 3px; flex: none; }
.chart { height: 24px; }
.hl-side { display: flex; align-items: center; height: 28px; background: #c9def2; border: 1px solid #b4cde6; border-left: 0; }
.hl-chart { display: flex; align-items: center; justify-content: center; width: 26px; height: 25px; margin-left: 2px; background: #c9def2; border: 1px solid #b4cde6; }
.nudge2 { margin-left: 5px; }
.nudge3 { margin-left: 7px; }
.sm { font-family: "DejaVu Sans", sans-serif; font-weight: bold; font-size: 9px; fill: #5a4a18; }
.sm-o { fill: #b86a1c; }
.xs { font-family: "DejaVu Sans", sans-serif; font-weight: bold; font-size: 6px; fill: #333; }

/* viewport */
.viewport { position: relative; flex: 1; min-width: 0; height: 439px; background: #fff; border-bottom: 1px solid #a8a8a8; overflow: hidden; }
.legend { padding: 24px 0 0 33px; }
.legend-title { height: 18px; line-height: 18px; font-size: 13.5px; color: #333; margin-bottom: 9px; }
.legend-body { display: flex; }
.legend-bar { display: flex; flex-direction: column; width: 22px; border-left: 1px solid #333; border-right: 1px solid #333; border-top: 1px solid #555; }
.legend-bar span { display: block; height: 14px; }
.c0 { background: #c4c4c4; margin-top: -1px; }
.c1 { background: #ff0000; }
.c2 { background: #ff5c00; }
.c3 { background: #ffb400; }
.c4 { background: #e9ff00; }
.c5 { background: #80ff00; }
.c6 { background: #2cff00; }
.c7 { background: #00ff2c; }
.c8 { background: #00ff90; }
.c9 { background: #00ffe9; }
.c10 { background: #00b4ff; }
.c11 { background: #005cff; }
.c12 { background: #0000ff; }
.c13 { background: #333333; }
.legend-labels { list-style: none; margin: 7px 0 0; padding: 0; }
.legend-labels li { position: relative; height: 14px; line-height: 14px; padding-left: 13px; font-size: 13.7px; color: #2a2a2a; white-space: nowrap; }
.legend-labels li::before { content: ""; position: absolute; left: 0; top: 7px; width: 6px; height: 1px; background: #333; }
.stepinfo { position: absolute; left: 733px; top: 8px; width: 300px; font-family: "Liberation Mono", monospace; font-size: 15px; letter-spacing: .9px; line-height: 20px; color: #cda050; white-space: pre; }
.model { position: absolute; left: 0; top: 0; width: 895px; height: 439px; }
.chord { fill: none; stroke-width: 1.200; }
.chord.a { stroke: url(#chordA); }
.chord.b { stroke: url(#chordB); }
.chord.c { stroke: #22228e; stroke-width: 1.300; }
.webline { fill: none; stroke: url(#web); stroke-width: 1.100; }
.webtop { fill: none; stroke: #a8e050; stroke-width: 1.100; }
.cursor { fill: #fff; stroke: #333; stroke-width: 1; }

/* prompt */
.promptbar { display: flex; justify-content: flex-end; align-items: center; height: 39px; background: linear-gradient(#fbfbfb, #ececec); border-bottom: 2px solid #ababab; }
.prompt-icon { width: 10px; height: 24px; }

/* sizes */
.w17 { width: 17px; } .w26 { width: 26px; } .w27 { width: 27px; } .w92 { width: 92px; } .w93 { width: 93px; }
.w112 { width: 112px; } .w113 { width: 113px; } .w116 { width: 116px; } .w255 { width: 255px; } .w260 { width: 260px; }
.w298 { width: 298px; } .w321 { width: 321px; } .w349 { width: 349px; }
.i9 { width: 8px; height: 13px; }
.w12h16 { width: 12px; height: 16px; } .w14h20 { width: 14px; height: 20px; } .w14h22 { width: 14px; height: 22px; }
.w16h16 { width: 16px; height: 16px; } .w16h20 { width: 16px; height: 20px; } .w16h24 { width: 16px; height: 24px; }
.w18h20 { width: 18px; height: 20px; } .w19h20 { width: 19px; height: 20px; } .w20h20 { width: 20px; height: 20px; } .w20h24 { width: 20px; height: 24px; }
.w21h20 { width: 21px; height: 20px; } .w21h21 { width: 21px; height: 21px; } .w21h22 { width: 21px; height: 22px; }
.w22h20 { width: 22px; height: 20px; } .w22h22 { width: 22px; height: 22px; } .w23h20 { width: 23px; height: 20px; }
.w24h14 { width: 24px; height: 14px; } .w24h22 { width: 24px; height: 22px; } .w24h24 { width: 24px; height: 24px; }

/* spacing */
.ml1 { margin-left: 1px; } .ml2 { margin-left: 2px; } .ml3 { margin-left: 3px; } .ml4 { margin-left: 4px; } .ml5 { margin-left: 5px; }
.ml6 { margin-left: 6px; } .ml7 { margin-left: 7px; } .ml8 { margin-left: 8px; } .ml9 { margin-left: 9px; } .ml10 { margin-left: 10px; }
.ml11 { margin-left: 11px; } .ml12 { margin-left: 12px; } .ml13 { margin-left: 13px; } .ml14 { margin-left: 14px; } .ml15 { margin-left: 15px; } .ml16 { margin-left: 16px; } .ml19 { margin-left: 19px; }
.ml58 { margin-left: 58px; } .ml61 { margin-left: 61px; } .ml141 { margin-left: 141px; } .ml291 { margin-left: 291px; }
```
